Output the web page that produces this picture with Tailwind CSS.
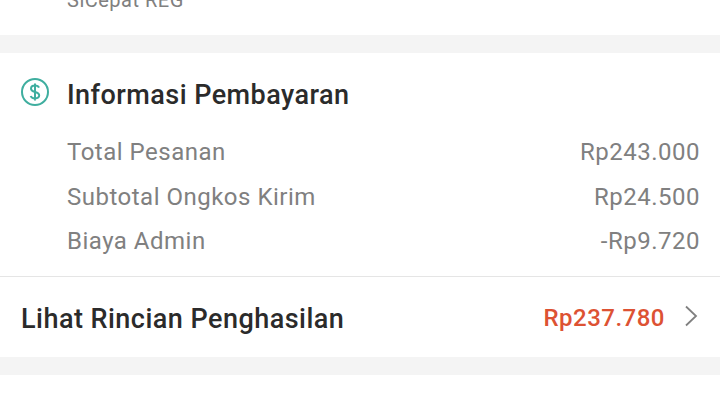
<!doctype html>
<html><head><script src="https://cdn.jsdelivr.net/npm/@tailwindcss/browser@4"></script></head>
<body class="m-0 bg-white">
<div class="w-[720px] h-[405px] overflow-hidden flex flex-col font-['Roboto',sans-serif] tracking-[0.5px]">
  <div class="h-[35px] shrink-0 overflow-hidden pl-[67px]">
    <div class="text-[20px] leading-[30px] mt-[-15px] text-[#808080]">SiCepat REG</div>
  </div>
  <div class="h-[18px] shrink-0 bg-[#f4f4f4]"></div>
  <div class="h-[304px] shrink-0 flex flex-col">
    <div class="flex items-center h-[82px] pl-[21px] shrink-0 pt-[2px]">
      <svg class="mr-[18px] -mt-[6px]" width="28" height="28" viewBox="0 0 28 28" fill="none">
        <circle cx="14" cy="14" r="13" stroke="#3fae9f" stroke-width="2"/>
        <path d="M18 9.600c-.6-1.300-2-2-4-2-2.400 0-4 1.200-4 3.100 0 4.300 8.200 2.300 8.200 6.600 0 1.900-1.800 3.100-4.200 3.100-2.200 0-3.800-.9-4.300-2.400M14 5.500v17" stroke="#3fae9f" stroke-width="2"/>
      </svg>
      <span class="text-[27px] leading-[32px] font-medium tracking-[0.45px] text-[#2b2b2b]">Informasi Pembayaran</span>
    </div>
    <div class="flex flex-col pr-[20px] pl-[67px] text-[24px] leading-[30px] text-[#808080] gap-[14.500px] mt-[2px]">
      <div class="flex justify-between"><span>Total Pesanan</span><span>Rp243.000</span></div>
      <div class="flex justify-between"><span>Subtotal Ongkos Kirim</span><span>Rp24.500</span></div>
      <div class="flex justify-between"><span>Biaya Admin</span><span>-Rp9.720</span></div>
    </div>
    <div class="mt-[20px] border-t border-[#e5e5e5] flex items-center justify-between flex-1 pl-[21px] pr-[20px] pt-[2px]">
      <span class="text-[27px] leading-[32px] font-medium tracking-[0.47px] text-[#2b2b2b] mt-[1px]">Lihat Rincian Penghasilan</span>
      <div class="flex items-center">
        <span class="text-[24px] leading-[30px] font-medium text-[#dd5233]">Rp237.780</span>
        <svg class="ml-[19px] -mt-[5px] mr-[2px]" width="14" height="22" viewBox="0 0 14 22" fill="none"><path d="M2 1.500 12 11 2 20.500" stroke="#808080" stroke-width="1.800"/></svg>
      </div>
    </div>
  </div>
  <div class="h-[18px] shrink-0 bg-[#f4f4f4]"></div>
  <div class="flex-1"></div>
</div>
</body></html>
